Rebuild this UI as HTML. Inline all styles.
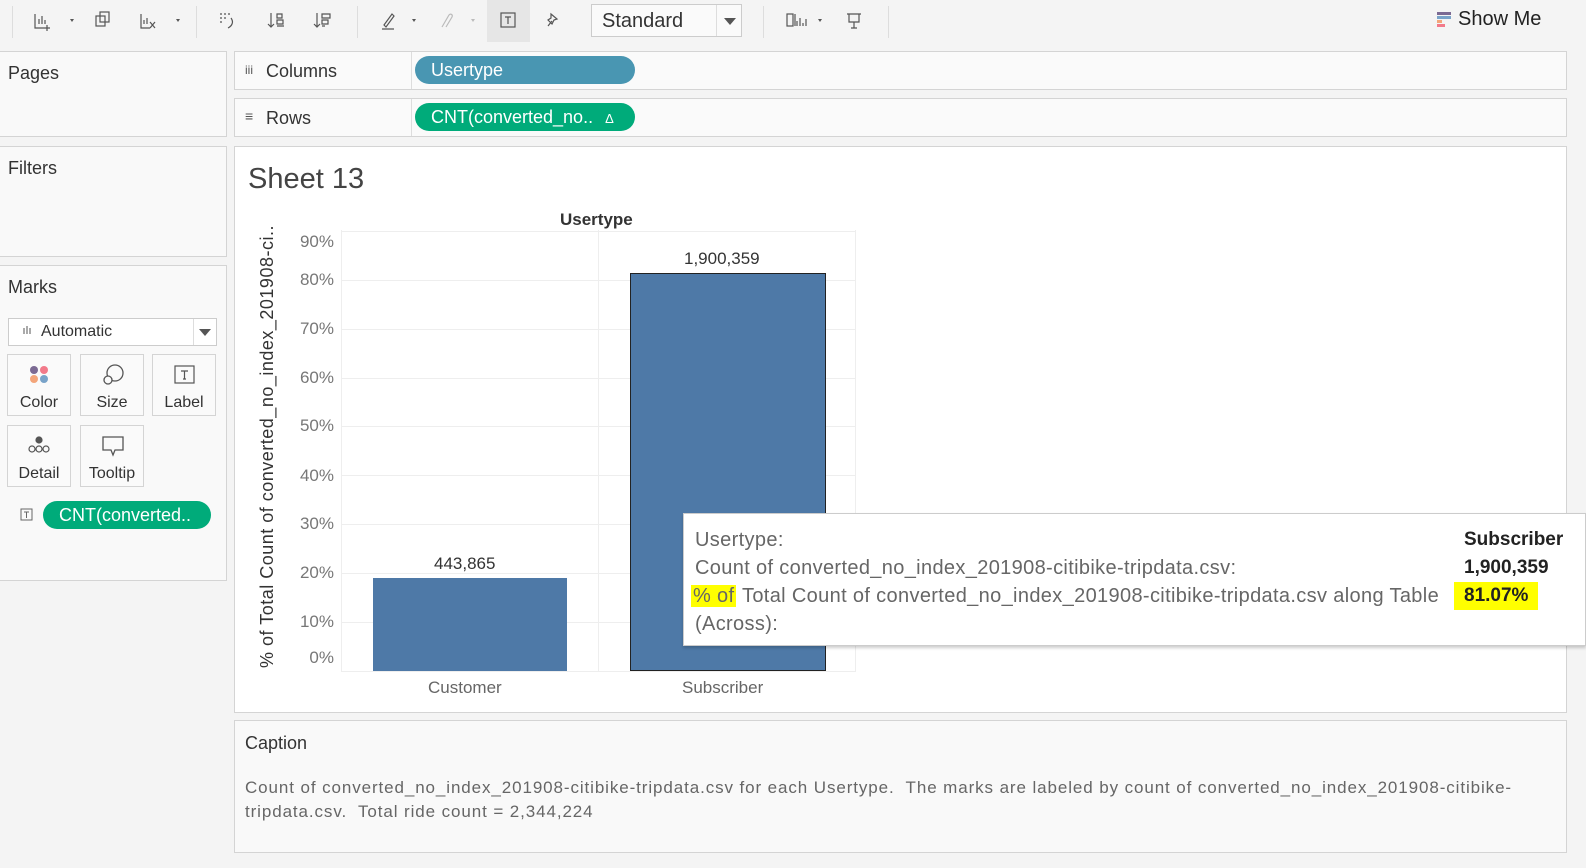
<!DOCTYPE html>
<html><head><meta charset="utf-8"><style>
*{box-sizing:border-box;margin:0;padding:0}
body{width:1586px;height:868px;background:#f4f4f4;font-family:"Liberation Sans",sans-serif;color:#333;position:relative;overflow:hidden}
.a{position:absolute}
.panel{position:absolute;background:#f9f9f9;border:1px solid #d4d4d4}
.pill{position:absolute;border-radius:14px;color:#fff;font-size:18px;padding-left:16px;line-height:28px;height:28px}
.t{font-size:18px;color:#333}
.card{position:absolute;border:1px solid #d4d4d4;background:#fafafa;width:64px;height:62px;font-size:16px;text-align:center}
.card span{position:absolute;bottom:3px;left:0;right:0}
.yl{position:absolute;right:0;font-size:17px;color:#777;text-align:right}
.g{position:absolute;left:341px;width:515px;height:1px;background:#eee}
.tt{font-size:20px;color:#666;position:absolute;left:11px;letter-spacing:0.35px;white-space:nowrap}
.tv{font-size:19px;color:#222;position:absolute;font-weight:bold}
</style></head><body>
<div class="a" style="left:0;top:0;width:1586px;height:46px;background:#f4f4f4"></div>
<div class="a" style="left:12px;top:6px;width:1px;height:32px;background:#ddd"></div>
<div class="a" style="left:196px;top:6px;width:1px;height:32px;background:#ddd"></div>
<div class="a" style="left:357px;top:6px;width:1px;height:32px;background:#ddd"></div>
<div class="a" style="left:763px;top:6px;width:1px;height:32px;background:#ddd"></div>
<div class="a" style="left:888px;top:6px;width:1px;height:32px;background:#ddd"></div>
<div class="a" style="left:487px;top:0;width:43px;height:42px;background:#e6e6e6"></div>
<svg class="a" style="left:0;top:0" width="900" height="42" fill="none" stroke="#555" stroke-width="1.2">
<path d="M35 14v14h12M39 24v-5M42 24v-8M45 24v-4M47 25v6M44 28h6"/><path d="M70 19l2 3 2-3z" fill="#555" stroke="none"/>
<rect x="96" y="16" width="9" height="10"/><rect x="100" y="12" width="9" height="10"/>
<path d="M141 14v14h9M144 24v-4M147 24v-6M150 22l5 6M155 22l-5 6"/><path d="M176 19l2 3 2-3z" fill="#555" stroke="none"/>
<path d="M220 14h2M224 14h2M228 14h2M220 18h2M224 18h2M220 22h2M231 18c3 4 1 8-3 10"/>
<path d="M271 13v14M268 24l3 3 3-3M277 14h5v4h-5zM277 20h6v4h-6zM277 26h7"/>
<path d="M317 13v14M314 24l3 3 3-3M322 14h8v4h-8zM322 20h6v4h-6zM322 26h3"/>
<path d="M384 25l8-11 2 2-8 11zM382 29h12"/><path d="M412 19l2 3 2-3z" fill="#555" stroke="none"/>
<path d="M442 27l7-12c2-2 4 0 3 2l-6 10" stroke="#bbb"/><path d="M471 19l2 3 2-3z" fill="#bbb" stroke="none"/>
<rect x="501" y="13" width="14" height="14"/><path d="M505 17h6M508 17v7"/>
<path d="M548 26l4-5M551 14l6 5-3 1-2 4-4-4 3-2z"/>
<rect x="787" y="14" width="6" height="12"/><path d="M795 14v12M797 26v-5M800 26v-8M803 26v-3M806 26v-7"/><path d="M818 19l2 3 2-3z" fill="#555" stroke="none"/>
<path d="M847 14h14M849 14v8h10v-8M854 22v6M851 28h6"/>
</svg>
<div class="a" style="left:591px;top:4px;width:151px;height:33px;border:1px solid #ccc;background:#fafafa;font-size:20px;padding:5px 0 0 10px;color:#333">Standard<div class="a" style="left:124px;top:0;width:1px;height:31px;background:#ddd"></div><div class="a" style="left:132px;top:13px;border:6px solid transparent;border-top:7px solid #555"></div></div>
<div class="a" style="left:1437px;top:12px;width:14px;height:3px;background:#7b6a93"></div>
<div class="a" style="left:1437px;top:16px;width:14px;height:3px;background:#79a3c9"></div>
<div class="a" style="left:1437px;top:20px;width:5px;height:3px;background:#f3a57a"></div>
<div class="a" style="left:1437px;top:24px;width:8px;height:3px;background:#f27a8a"></div>
<div class="a" style="left:1458px;top:8px;font-size:20px;color:#222">Show Me</div>
<div class="panel" style="left:-1px;top:51px;width:228px;height:86px"><div class="t a" style="left:8px;top:11px">Pages</div></div>
<div class="panel" style="left:-1px;top:146px;width:228px;height:111px"><div class="t a" style="left:8px;top:11px">Filters</div></div>
<div class="panel" style="left:-1px;top:265px;width:228px;height:316px">
<div class="t a" style="left:8px;top:11px">Marks</div>
<div class="a" style="left:8px;top:52px;width:209px;height:28px;border:1px solid #ccc;background:#fff;font-size:16px;padding:4px 0 0 32px">Automatic
<div class="a" style="left:14px;top:9px;width:2px;height:6px;background:#aaa"></div><div class="a" style="left:17px;top:7px;width:2px;height:8px;background:#aaa"></div><div class="a" style="left:20px;top:9px;width:2px;height:6px;background:#aaa"></div>
<div class="a" style="left:184px;top:0;width:1px;height:26px;background:#ddd"></div><div class="a" style="left:190px;top:10px;border:6px solid transparent;border-top:7px solid #555"></div></div>
</div>
<div class="card" style="left:7px;top:354px"><svg class="a" style="left:20px;top:9px" width="24" height="24"><circle cx="6" cy="6" r="4" fill="#7b6a93"/><circle cx="16" cy="6" r="4" fill="#f27a8a"/><circle cx="6" cy="15" r="4" fill="#f3a57a"/><circle cx="16" cy="15" r="4" fill="#79a3c9"/></svg><span>Color</span></div>
<div class="card" style="left:80px;top:354px"><svg class="a" style="left:20px;top:8px" width="26" height="24" fill="none" stroke="#555" stroke-width="1.3"><circle cx="14" cy="10" r="8"/><circle cx="7" cy="17" r="4" fill="#fafafa"/></svg><span>Size</span></div>
<div class="card" style="left:152px;top:354px"><svg class="a" style="left:21px;top:10px" width="24" height="22" fill="none" stroke="#555" stroke-width="1.2"><rect x="1" y="1" width="19" height="17"/><path d="M7 6h7M10.5 6v8M9 14h3"/></svg><span>Label</span></div>
<div class="card" style="left:7px;top:425px"><svg class="a" style="left:18px;top:10px" width="28" height="20" fill="none" stroke="#555" stroke-width="1.2"><circle cx="13" cy="4" r="3" fill="#555"/><circle cx="6" cy="13" r="3"/><circle cx="13" cy="13" r="3"/><circle cx="20" cy="13" r="3"/></svg><span>Detail</span></div>
<div class="card" style="left:80px;top:425px"><svg class="a" style="left:20px;top:9px" width="26" height="24" fill="none" stroke="#555" stroke-width="1.3"><path d="M2 2h20v13h-8l-2 5-2-5H2z"/></svg><span>Tooltip</span></div>
<svg class="a" style="left:20px;top:508px" width="14" height="14" fill="none" stroke="#666"><rect x="1" y="1" width="11" height="11"/><path d="M4 4h5M6.5 4v6"/></svg>
<div class="pill" style="left:43px;top:501px;width:168px;background:#00ab7a">CNT(converted..</div>
<div class="panel" style="left:234px;top:51px;width:1333px;height:39px;background:#fafafa"><div class="a" style="left:176px;top:0;width:1px;height:37px;background:#ddd"></div><div class="t a" style="left:31px;top:9px">Columns</div><div class="a" style="left:10px;top:11px;font-size:12px;color:#555">iii</div></div>
<div class="pill" style="left:415px;top:56px;width:220px;background:#4996b2">Usertype</div>
<div class="panel" style="left:234px;top:98px;width:1333px;height:39px;background:#fafafa"><div class="a" style="left:176px;top:0;width:1px;height:37px;background:#ddd"></div><div class="t a" style="left:31px;top:9px">Rows</div><div class="a" style="left:10px;top:9px;font-size:14px;color:#555">≡</div></div>
<div class="pill" style="left:415px;top:103px;width:220px;background:#00ab7a">CNT(converted_no..<span style="font-size:13px;margin-left:12px">Δ</span></div>
<div class="a" style="left:234px;top:146px;width:1333px;height:567px;background:#fff;border:1px solid #d4d4d4"></div>
<div class="a" style="left:248px;top:163px;font-size:29px;color:#444">Sheet 13</div>
<div class="a" style="left:560px;top:210px;font-size:17px;font-weight:bold;color:#333">Usertype</div>
<div class="a" style="left:341px;top:230px;width:1px;height:442px;background:#eee"></div>
<div class="a" style="left:598px;top:230px;width:1px;height:442px;background:#eee"></div>
<div class="a" style="left:855px;top:230px;width:1px;height:442px;background:#eee"></div>
<div class="g" style="top:231px"></div><div class="g" style="top:280px"></div><div class="g" style="top:329px"></div><div class="g" style="top:378px"></div><div class="g" style="top:426px"></div><div class="g" style="top:475px"></div><div class="g" style="top:524px"></div><div class="g" style="top:573px"></div><div class="g" style="top:622px"></div><div class="g" style="top:671px"></div>
<div class="a" style="left:280px;top:0;width:54px;height:868px">
<div class="yl" style="top:232px">90%</div><div class="yl" style="top:270px">80%</div><div class="yl" style="top:319px">70%</div><div class="yl" style="top:368px">60%</div><div class="yl" style="top:416px">50%</div><div class="yl" style="top:466px">40%</div><div class="yl" style="top:514px">30%</div><div class="yl" style="top:563px">20%</div><div class="yl" style="top:612px">10%</div><div class="yl" style="top:648px">0%</div></div>
<div class="a" style="left:257px;top:668px;transform:rotate(-90deg);transform-origin:0 0;font-size:18px;color:#333;white-space:nowrap;letter-spacing:0.5px">% of Total Count of converted_no_index_201908-ci..</div>
<div class="a" style="left:373px;top:578px;width:194px;height:93px;background:#4e79a7"></div>
<div class="a" style="left:630px;top:273px;width:196px;height:398px;background:#4e79a7;border:1px solid #222"></div>
<div class="a" style="left:434px;top:554px;font-size:17px;color:#333">443,865</div>
<div class="a" style="left:684px;top:249px;font-size:17px;color:#333">1,900,359</div>
<div class="a" style="left:428px;top:678px;font-size:17px;color:#666">Customer</div>
<div class="a" style="left:682px;top:678px;font-size:17px;color:#666">Subscriber</div>
<div class="a" style="left:683px;top:513px;width:903px;height:133px;background:#fff;border:1px solid #ccc;box-shadow:0 2px 3px rgba(0,0,0,.2)">
<div class="tt" style="top:15px">Usertype:</div>
<div class="tt" style="top:43px">Count of converted_no_index_201908-citibike-tripdata.csv:</div>
<div class="tt" style="top:71px;left:7px"><span style="background:#ffff00;padding:0 2px">% of</span> Total Count of converted_no_index_201908-citibike-tripdata.csv along Table</div>
<div class="tt" style="top:99px">(Across):</div>
<div class="tv" style="left:780px;top:15px">Subscriber</div>
<div class="tv" style="left:780px;top:43px">1,900,359</div>
<div class="tv" style="left:770px;top:68px;background:#ffff00;padding:3px 10px 3px 10px">81.07%</div>
</div>
<div class="panel" style="left:234px;top:720px;width:1333px;height:133px;background:#f9f9f9">
<div class="t a" style="left:10px;top:12px">Caption</div>
<div class="a" style="left:10px;top:55px;font-size:17px;color:#666;line-height:24px;white-space:nowrap;letter-spacing:0.9px">Count of converted_no_index_201908-citibike-tripdata.csv for each Usertype.&nbsp; The marks are labeled by count of converted_no_index_201908-citibike-<br>tripdata.csv.&nbsp; Total ride count = 2,344,224</div>
</div>
</body></html>
